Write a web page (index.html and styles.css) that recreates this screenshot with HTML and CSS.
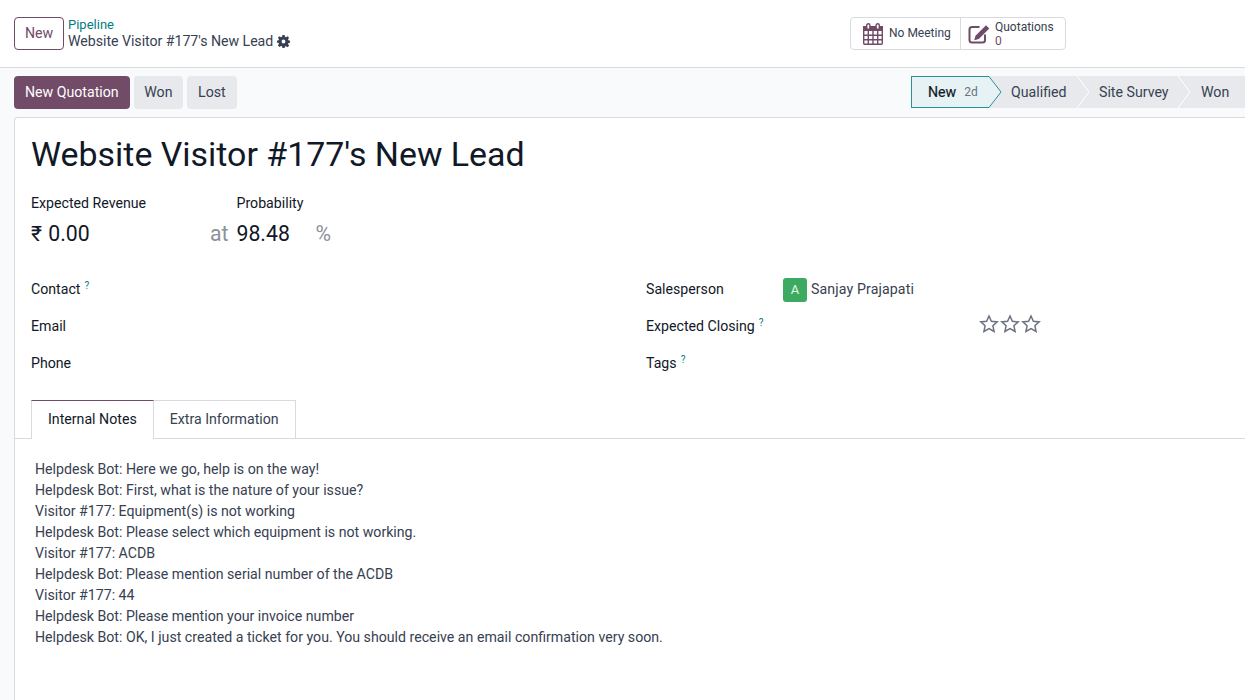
FILE: index.html
```html
<!DOCTYPE html>
<html lang="en">
<head>
<meta charset="utf-8">
<title>Website Visitor #177's New Lead</title>
<link rel="stylesheet" href="styles.css">
</head>
<body>
<header class="topbar">
  <div class="crumbs">
    <button class="btn-new">New</button>
    <div class="crumb-text">
      <a class="crumb-link">Pipeline</a>
      <div class="crumb-title"><span>Website Visitor #177's New Lead</span>
        <svg class="gear" viewBox="0 0 24 24" width="13" height="13"><path fill="#374151" fill-rule="evenodd" d="M10 0h4l.7 3.400 1.900.8L19.500 2.300l2.800 2.800-1.900 2.900.8 1.900L24 10.400v3.800l-2.800.7-.8 1.900 1.900 2.900-2.800 2.800-2.900-1.900-1.900.8L14 24h-4l-.7-3.100-1.900-.8-2.900 1.900-2.800-2.800 1.900-2.900-.8-1.900L0 14.200v-3.800l2.800-.5.800-1.900-1.900-2.900 2.800-2.800 2.900 1.900 1.900-.8L10 0zm2 8.500a3.500 3.500 0 1 0 0 7 3.500 3.500 0 0 0 0-7z"/></svg>
      </div>
    </div>
  </div>
  <div class="smart">
    <div class="smart-btn smart-meet">
      <svg viewBox="0 0 22 22" width="22" height="22"><rect x="1" y="3" width="20" height="5" fill="#714B67"/><g fill="none" stroke="#714B67" stroke-width="1.400"><rect x="1.700" y="3.700" width="18.600" height="17.600" rx="1"/><path d="M2 12.300h18M2 16.700h18M6.300 8v13M11 8v13M15.700 8v13"/></g><rect x="4.700" y=".7" width="3.200" height="5.600" rx="1.600" fill="#fff" stroke="#714B67" stroke-width="1.400"/><rect x="14.100" y=".7" width="3.200" height="5.600" rx="1.600" fill="#fff" stroke="#714B67" stroke-width="1.400"/></svg>
      <span class="smart-label">No Meeting</span>
    </div>
    <div class="smart-btn smart-quote">
      <svg viewBox="0 0 22 22" width="22" height="22"><path fill="none" stroke="#714B67" stroke-width="2" d="M11.500 4H4a2.500 2.500 0 0 0-2.500 2.500V17A2.500 2.500 0 0 0 4 19.500h10.500A2.500 2.500 0 0 0 17 17v-5.500"/><path fill="#714B67" d="M18 2.200l3.300 3.300L10.800 16l-4.600 1.200L7.500 12.700z"/></svg>
      <div class="smart-stack"><span class="smart-label">Quotations</span><span class="smart-num">0</span></div>
    </div>
  </div>
</header>
<div class="actionbar">
  <div class="actions">
    <button class="btn btn-primary">New Quotation</button>
    <button class="btn">Won</button>
    <button class="btn btn-lost">Lost</button>
  </div>
  <div class="status">
    <div class="stage stage-current"><b>New</b><span class="days">2d</span>
      <svg class="tip" viewBox="0 0 13 32" width="13" height="32"><path d="M0 .5L12 16 0 31.500" fill="#e6f2f3" stroke="#2b8f94"/></svg>
    </div>
    <div class="stage stage-q">Qualified<svg class="tip" viewBox="0 0 13 32" width="13" height="32"><path d="M0 0L12 16 0 32" fill="#e7e9ed" stroke="#fff"/></svg></div>
    <div class="stage stage-s">Site Survey<svg class="tip" viewBox="0 0 13 32" width="13" height="32"><path d="M0 0L12 16 0 32" fill="#e7e9ed" stroke="#fff"/></svg></div>
    <div class="stage stage-w">Won</div>
  </div>
</div>
<main class="sheet">
  <h1 class="title">Website Visitor #177's New Lead</h1>
  <div class="money">
    <div class="money-col money-rev"><label>Expected Revenue</label><div class="big big-cur">₹ 0.00</div></div>
    <div class="at">at</div>
    <div class="money-col money-prob"><label>Probability</label><div class="big">98.48</div></div>
    <div class="pct">%</div>
  </div>
  <div class="fields">
    <div class="col">
      <div class="row"><span class="lbl">Contact<sup>?</sup></span></div>
      <div class="row"><span class="lbl">Email</span></div>
      <div class="row"><span class="lbl">Phone</span></div>
    </div>
    <div class="col col-right">
      <div class="row"><span class="lbl">Salesperson</span><span class="val"><span class="avatar">A</span><span class="person">Sanjay Prajapati</span></span></div>
      <div class="row"><span class="lbl">Expected Closing<sup>?</sup></span><span class="val stars">
        <svg viewBox="0 0 20 20" width="20" height="20"><path fill="none" stroke="#6b7280" stroke-width="1.500" d="M10 2l2.400 5.300 5.800.6-4.300 3.900 1.200 5.700L10 14.600l-5.100 2.900 1.200-5.700L1.800 7.900l5.800-.6z"/></svg>
        <svg viewBox="0 0 20 20" width="20" height="20"><path fill="none" stroke="#6b7280" stroke-width="1.500" d="M10 2l2.400 5.300 5.800.6-4.300 3.900 1.200 5.700L10 14.600l-5.100 2.900 1.200-5.700L1.800 7.900l5.800-.6z"/></svg>
        <svg viewBox="0 0 20 20" width="20" height="20"><path fill="none" stroke="#6b7280" stroke-width="1.500" d="M10 2l2.400 5.300 5.800.6-4.300 3.900 1.200 5.700L10 14.600l-5.100 2.900 1.200-5.700L1.800 7.900l5.800-.6z"/></svg>
      </span></div>
      <div class="row"><span class="lbl">Tags<sup>?</sup></span></div>
    </div>
  </div>
  <div class="tabs">
    <div class="tab tab-active">Internal Notes</div>
    <div class="tab">Extra Information</div>
  </div>
  <div class="notes">
    <p>Helpdesk Bot: Here we go, help is on the way!</p>
    <p>Helpdesk Bot: First, what is the nature of your issue?</p>
    <p>Visitor #177: Equipment(s) is not working</p>
    <p>Helpdesk Bot: Please select which equipment is not working.</p>
    <p>Visitor #177: ACDB</p>
    <p>Helpdesk Bot: Please mention serial number of the ACDB</p>
    <p>Visitor #177: 44</p>
    <p>Helpdesk Bot: Please mention your invoice number</p>
    <p>Helpdesk Bot: OK, I just created a ticket for you. You should receive an email confirmation very soon.</p>
  </div>
</main>
</body>
</html>
```
FILE: styles.css
```css
* { box-sizing: border-box; }
html, body { margin: 0; height: 100%; }
body {
  font-family: Roboto, "Noto Sans", sans-serif;
  font-size: 14.16px;
  line-height: 21px;
  color: #374151;
  background: #f9fafb;
  overflow: hidden;
}
button { font: inherit; cursor: pointer; }
.topbar {
  height: 68px;
  background: #fff;
  border-bottom: 1px solid #d8dadd;
  display: flex;
  align-items: flex-start;
  padding: 17px 179px 0 14px;
  justify-content: space-between;
}
.crumbs { display: flex; gap: 4px; }
.btn-new {
  width: 50px;
  height: 33px;
  background: #fff;
  border: 1px solid #714b67;
  border-radius: 4px;
  color: #714b67;
  padding: 0;
}
.crumb-text { display: flex; flex-direction: column; line-height: 16px; }
.crumb-link { color: #017e84; font-size: 13px; }
.crumb-title { display: flex; align-items: center; gap: 4px; line-height: 17px; color: #374151; }
.crumb-title span { letter-spacing: -.03px; }
.smart { display: flex; height: 33px; border: 1px solid #d8dadd; border-radius: 4px; background: #fff; }
.smart-btn { display: flex; align-items: center; gap: 5px; }
.smart-meet { width: 110px; padding-left: 11px; border-right: 1px solid #d8dadd; }
.smart-meet .smart-label { margin-top: -2px; }
.smart-quote { width: 104px; padding-left: 7px; }
.smart-label { font-size: 12px; line-height: 14px; }
.smart-stack { display: flex; flex-direction: column; line-height: 14px; }
.smart-num { font-size: 12px; line-height: 14px; color: #714b67; }
.actionbar {
  height: 49px;
  display: flex;
  justify-content: space-between;
  padding: 8px 0 0 14px;
}
.actions { display: flex; gap: 4px; height: 33px; }
.btn {
  border: 0;
  border-radius: 4px;
  background: #e7e9ed;
  color: #374151;
  padding: 0 10.600px;
}
.btn-primary { background: #714b67; color: #fff; padding: 0 11px; }
.btn-lost { padding: 0 11px; }
.status { display: flex; height: 32px; width: 334px; }
.stage {
  position: relative;
  display: flex;
  align-items: center;
  background: #e7e9ed;
  color: #374151;
}
.stage b { font-weight: 400; color: #111827; -webkit-text-stroke: .2px #111827; }
.stage-current {
  width: 78px;
  padding-left: 16px;
  background: #e6f2f3;
  border: 1px solid #2b8f94;
  border-right: 0;
  z-index: 3;
}
.days { margin-left: 8px; font-size: 12px; color: #6b7280; }
.tip { position: absolute; right: -13px; top: -1px; }
.stage-q { z-index: 2; width: 88px; padding-left: 22px; }
.stage-s { z-index: 1; width: 101px; padding-left: 22px; }
.stage-q .tip, .stage-s .tip { top: 0; }
.stage-w { flex: 1; padding-left: 23px; }
.sheet {
  margin-left: 14px;
  height: 600px;
  background: #fff;
  border: 1px solid #d8dadd;
  border-right: 0;
  border-bottom: 0;
  border-top-left-radius: 4px;
  padding-top: 15px;
}
.title {
  margin: 0 0 0 16px;
  font-size: 33.900px;
  line-height: 44px;
  font-weight: 400;
  color: #111827;
}
.money { display: flex; margin: 16px 0 0 16px; height: 54px; }
.money-col label { display: block; color: #111827; line-height: 21px; }
.big { font-size: 21.24px; line-height: 26px; margin-top: 7px; color: #111827; }
.big-cur { word-spacing: 1px; }
.money-rev { width: 179px; }
.money-prob { width: 79px; }
.at, .pct { font-size: 21.24px; line-height: 26px; margin-top: 28px; color: #8c919b; }
.at { width: 26.500px; }
.fields { display: flex; margin: 32px 0 0 16px; }
.col { flex: none; width: 615px; display: flex; flex-direction: column; gap: 16px; }
.row { display: flex; height: 21px; color: #111827; }
.lbl { width: 137px; }
sup { color: #017e84; font-size: 10px; line-height: 0; margin-left: 4px; top: -5px; position: relative; vertical-align: baseline; }
.val { display: flex; align-items: center; gap: 4px; color: #374151; }
.person { letter-spacing: .12px; }
.avatar {
  width: 24px;
  height: 24px;
  border-radius: 3px;
  background: #3cab61;
  color: #e8f6ec;
  font-size: 13px;
  display: flex;
  align-items: center;
  justify-content: center;
}
.stars { gap: 1px; margin: -5px 0 0 196px; }
.tabs {
  display: flex;
  margin-top: 26px;
  padding-left: 16px;
  height: 39px;
  border-bottom: 1px solid #d8dadd;
}
.tab {
  height: 39px;
  padding: 8px 16px 0;
  border: 1px solid #d8dadd;
  border-left: 0;
  background: #fff;
}
.tab-active {
  color: #111827;
  border-left: 1px solid #d8dadd;
  border-top: 1px solid #714b67;
  border-bottom: 0;
}
.notes { padding: 20px 0 0 20px; }
.notes p { margin: 0; }
```
